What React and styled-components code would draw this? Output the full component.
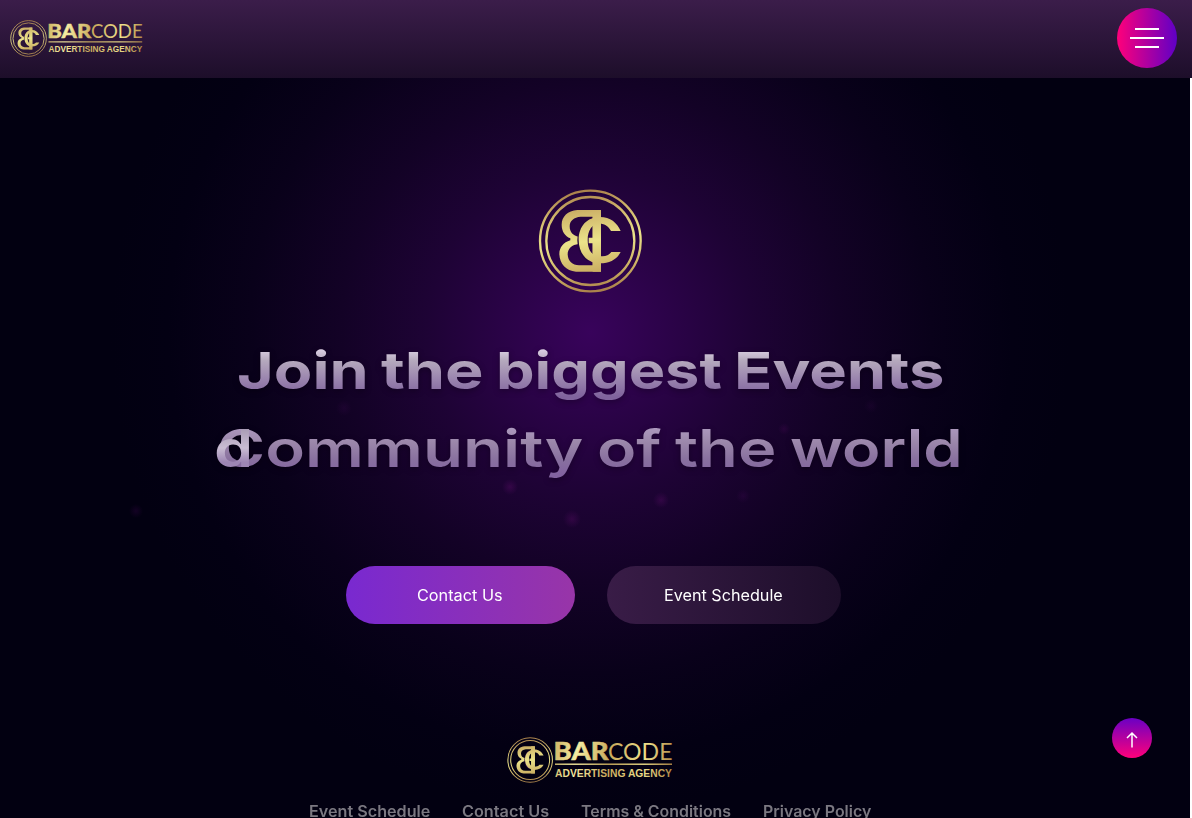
import React, { useLayoutEffect, useRef, useState } from "react";
import styled, { createGlobalStyle } from "styled-components";

const GlobalStyle = createGlobalStyle`
  * { box-sizing: border-box; }
  html, body { margin: 0; padding: 0; background: #fff; overflow: hidden; }
  body { font-family: Inter, "Open Sans", sans-serif; }
`;

const Page = styled.div`
  height: 818px;
  width: 1192px;
  overflow: hidden;
  display: flex;
  flex-direction: column;
`;

const Header = styled.header`
  flex: none;
  height: 78px;
  padding: 0 15px 2px 10px;
  display: flex;
  align-items: center;
  justify-content: space-between;
  background: linear-gradient(180deg, #3b1d4a 0%, #1d0e2a 100%);
`;

const MenuButton = styled.button`
  width: 60px;
  height: 60px;
  border: 0;
  padding: 0;
  border-radius: 50%;
  display: flex;
  flex-direction: column;
  align-items: center;
  justify-content: center;
  gap: 7px;
  background: linear-gradient(90deg, #ff007a 0%, #5f00c6 100%);
`;

const MenuBar = styled.span`
  width: ${(p) => p.$width}px;
  height: 2px;
  background: #fff;
`;

const Main = styled.main`
  flex: 1;
  width: 1190px;
  padding-right: 10px;
  display: flex;
  flex-direction: column;
  align-items: center;
  background:
    radial-gradient(circle at 510px 409px, rgba(110, 15, 120, 0.3), transparent 8px),
    radial-gradient(circle at 572px 441px, rgba(110, 15, 120, 0.28), transparent 9px),
    radial-gradient(circle at 661px 422px, rgba(110, 15, 120, 0.28), transparent 8px),
    radial-gradient(circle at 743px 418px, rgba(80, 10, 100, 0.2), transparent 7px),
    radial-gradient(circle at 784px 351px, rgba(100, 10, 110, 0.2), transparent 6px),
    radial-gradient(circle at 136px 433px, rgba(60, 5, 80, 0.3), transparent 7px),
    radial-gradient(circle at 344px 330px, rgba(70, 10, 90, 0.2), transparent 8px),
    radial-gradient(circle at 871px 328px, rgba(70, 10, 90, 0.15), transparent 7px),
    radial-gradient(circle 480px at 590px 254px, #38035b 0%, #2b0348 17%, #1e0335 34%, #130226 52%, #09011a 71%, #030013 88%, #020011 100%);
`;

const Emblem = styled.div`
  margin-top: 111px;
  height: 104px;
  svg { display: block; }
`;

const Title = styled.h1`
  margin: 38px 0 0;
  font-size: 51.5px;
  line-height: 78px;
  filter: drop-shadow(0 2px 3px rgba(0, 0, 0, 0.3));
`;

const Line = styled.span`
  display: flex;
  justify-content: center;
  gap: ${(p) => p.$gap}px;
  position: relative;
  font-weight: ${(p) => p.$weight};
`;

const FitBox = styled.span`
  display: inline-block;
  width: ${(p) => p.$width}px;
  white-space: nowrap;
`;

const FitInner = styled.span`
  display: inline-block;
  transform-origin: 0 50%;
`;

const tones = {
  first: "linear-gradient(180deg, #e4d9ec 20%, #b5a9bd 38%, #9a84ae 62%, #80639d 84%)",
  second: "linear-gradient(180deg, #ae9ac0 22%, #9c88ab 42%, #89719f 64%, #8263a0 84%)",
  bright: "linear-gradient(180deg, #a89bb4 25%, #c9bdd3 50%, #9d86b4 68%)",
};

const GradientText = styled.span`
  display: inline-block;
  background: ${(p) => tones[p.$tone]};
  background-clip: text;
  -webkit-background-clip: text;
  color: transparent;
`;

const StrayLetter = styled.span`
  position: absolute;
  left: -3px;
  top: 0;
`;

const Actions = styled.div`
  margin-top: 79px;
  margin-left: 7px;
  display: flex;
  gap: 32px;
`;

const Action = styled.a`
  width: ${(p) => p.$width}px;
  height: 58px;
  padding-right: 2px;
  border-radius: 29px;
  display: flex;
  align-items: center;
  justify-content: center;
  color: #fff;
  font-size: 15.5px;
  font-weight: 400;
  background: ${(p) =>
    p.$primary
      ? "linear-gradient(90deg, #7929d0 0%, #9835a8 100%)"
      : "linear-gradient(90deg, #391c47 0%, #1d0e2a 100%)"};
`;

const FooterBrand = styled.div`
  margin-top: 113px;
  height: 48px;
  svg { display: block; }
`;

const FooterLinks = styled.nav`
  margin-top: 15px;
  display: flex;
  gap: 32px;
  font-size: 15.5px;
  font-weight: 600;
  line-height: 24px;
  color: #7b7881;
`;

const ToTop = styled.button`
  position: absolute;
  left: 1112px;
  top: 718px;
  width: 40px;
  height: 40px;
  border: 0;
  padding: 4px 0 0;
  border-radius: 50%;
  display: flex;
  align-items: center;
  justify-content: center;
  background: linear-gradient(180deg, #6a00c4 0%, #ff007a 100%);
`;

function Fit({ width, children }) {
  const ref = useRef(null);
  const [scale, setScale] = useState(1);
  useLayoutEffect(() => {
    const measure = () => setScale(width / ref.current.offsetWidth);
    measure();
    document.fonts.ready.then(measure);
  }, [width]);
  return (
    <FitBox $width={width}>
      <FitInner ref={ref} style={{ transform: `scaleX(${scale})` }}>
        {children}
      </FitInner>
    </FitBox>
  );
}

function Word({ width, tone, children }) {
  return (
    <Fit width={width}>
      <GradientText $tone={tone}>{children}</GradientText>
    </Fit>
  );
}

function Monogram({ size, id, x, y }) {
  const gold = `url(#${id})`;
  return (
    <svg width={size} height={size} x={x} y={y} viewBox="54 27 312 312" fill="none">
      <defs>
        <linearGradient id={id} x1="190" y1="30" x2="232" y2="336" gradientUnits="userSpaceOnUse">
          <stop offset="0" stopColor="#a9804a" />
          <stop offset="0.22" stopColor="#cfb56a" />
          <stop offset="0.5" stopColor="#ebe38a" />
          <stop offset="0.78" stopColor="#cdb264" />
          <stop offset="1" stopColor="#a9804a" />
        </linearGradient>
      </defs>
      <circle cx="211" cy="183" r="151" stroke={gold} strokeWidth="7" />
      <circle cx="211" cy="183" r="132" stroke={gold} strokeWidth="7" />
      <path
        fill={gold}
        fillRule="evenodd"
        d="M243 90H172C143 92 125 110 125 134C125 154 135 168 151 175V181C130 187 118 203 118 222C119 252 138 272 168 275H243ZM218 110H182C162 112 149 122 149 139C149 157 160 168 176 170V192C156 194 143 206 143 223C144 244 157 255 177 256H218Z"
      />
      <path
        stroke="#22053c"
        strokeWidth="9"
        d="M205 122C168 140 166 220 205 240"
      />
      <path
        fill={gold}
        d="M302 153H273C266 139 255 131 239 131C216 131 203 151 203 180C203 210 216 229 239 229C255 229 266 227 274 216H302C291 238 270 250 240 250C201 250 176 220 176 180C176 139 201 111 240 111C271 111 291 128 302 153Z"
      />
      <path fill={gold} d="M218 90H243V275H218V190H206V173H218Z" />
    </svg>
  );
}

function Brand({ width, height, id }) {
  const gold = `url(#${id}-text)`;
  return (
    <svg width={width} height={height} viewBox="0 0 166 46" preserveAspectRatio="none">
      <defs>
        <linearGradient id={`${id}-text`} x1="48" y1="0" x2="165" y2="20" gradientUnits="userSpaceOnUse">
          <stop offset="0" stopColor="#cdb464" />
          <stop offset="0.2" stopColor="#f5eca1" />
          <stop offset="0.48" stopColor="#c9aa5c" />
          <stop offset="0.78" stopColor="#eee08a" />
          <stop offset="1" stopColor="#b58d4a" />
        </linearGradient>
      </defs>
      <Monogram size={46} id={`${id}-mark`} x={0} y={0} />
      <g fill={gold}>
        <text x="46.5" y="22.7" fontFamily="Lato" fontWeight="900" fontSize="24" textLength="55" lengthAdjust="spacingAndGlyphs" stroke={gold} strokeWidth="0.5">BAR</text>
        <text x="101" y="22.7" fontFamily="Lato" fontWeight="400" fontSize="24" textLength="64.5" lengthAdjust="spacingAndGlyphs">CODE</text>
        <rect x="48" y="26.5" width="117" height="1.4" />
        <text x="48" y="40" fontFamily="Liberation Sans" fontWeight="700" fontSize="10.5" textLength="117" lengthAdjust="spacingAndGlyphs">ADVERTISING AGENCY</text>
      </g>
    </svg>
  );
}

export default function App() {
  return (
    <Page>
      <GlobalStyle />
      <Header>
        <Brand width={133} height={37} id="head" />
        <MenuButton aria-label="Menu">
          <MenuBar $width={24} />
          <MenuBar $width={34} />
          <MenuBar $width={24} />
        </MenuButton>
      </Header>
      <Main>
        <Emblem>
          <Monogram size={104} id="hero" />
        </Emblem>
        <Title>
          <Line $gap={12} $weight={650}>
            <Word width={132} tone="first">Join</Word>
            <Word width={103} tone="first">the</Word>
            <Word width={226} tone="first">biggest</Word>
            <Word width={210} tone="first">Events</Word>
          </Line>
          <Line $gap={14} $weight={600}>
            <Word width={366} tone="second">Community</Word>
            <Word width={64} tone="second">of</Word>
            <Word width={101} tone="second">the</Word>
            <Word width={173} tone="second">world</Word>
            <StrayLetter>
              <Word width={39} tone="bright">d</Word>
            </StrayLetter>
          </Line>
        </Title>
        <Actions>
          <Action $width={229} $primary>
            <Fit width={86}>Contact Us</Fit>
          </Action>
          <Action $width={234}>
            <Fit width={119}>Event Schedule</Fit>
          </Action>
        </Actions>
        <FooterBrand>
          <Brand width={166} height={46} id="foot" />
        </FooterBrand>
        <FooterLinks>
          <Fit width={121}>Event Schedule</Fit>
          <Fit width={87}>Contact Us</Fit>
          <Fit width={150}>Terms &amp; Conditions</Fit>
          <Fit width={108}>Privacy Policy</Fit>
        </FooterLinks>
      </Main>
      <ToTop aria-label="Back to top">
        <svg width="14" height="18" viewBox="0 0 14 18" fill="none" stroke="#fff" strokeWidth="1.5">
          <path d="M7 16.5V2M2 7L7 2L12 7" />
        </svg>
      </ToTop>
    </Page>
  );
}
